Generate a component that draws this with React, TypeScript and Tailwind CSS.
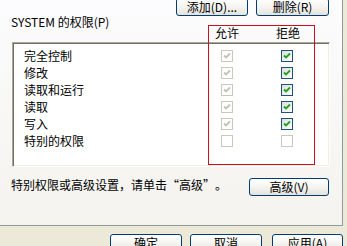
import React from "react";

type BoxKind = "allowOn" | "denyOn" | "off";

function Box({ kind }: { kind: BoxKind }) {
  const active = kind === "denyOn";
  return (
    <svg width="12" height="12" viewBox="0 0 12 12" className="block">
      <defs>
        <linearGradient id="cbg" x1="0" y1="0" x2="1" y2="1">
          <stop offset="0" stopColor="#dcdcd7" />
          <stop offset="1" stopColor="#ffffff" />
        </linearGradient>
      </defs>
      <rect
        x="0.5"
        y="0.5"
        width="11"
        height="11"
        fill={active ? "url(#cbg)" : "#ffffff"}
        stroke={active ? "#1c5180" : "#cac8bb"}
      />
      {kind !== "off" && (
        <polyline
          points="3,5.5 5,7.5 9,3.5"
          fill="none"
          stroke={active ? "#21a121" : "#c4c2b6"}
          strokeWidth="1.8"
        />
      )}
    </svg>
  );
}

function XPButton({ label, w }: { label: string; w: string }) {
  return (
    <div
      className={`${w} h-[18px] shrink-0 rounded-[3px] border border-[#003c74] bg-linear-to-b from-[#ffffff] via-[#f5f4f0] to-[#e3e2da] flex items-center justify-center leading-none text-[12px] whitespace-nowrap`}
    >
      {label}
    </div>
  );
}

const rows: { name: string; allow: BoxKind; deny: BoxKind }[] = [
  { name: "完全控制", allow: "allowOn", deny: "denyOn" },
  { name: "修改", allow: "allowOn", deny: "denyOn" },
  { name: "读取和运行", allow: "allowOn", deny: "denyOn" },
  { name: "读取", allow: "allowOn", deny: "denyOn" },
  { name: "写入", allow: "allowOn", deny: "denyOn" },
  { name: "特别的权限", allow: "off", deny: "off" },
];

export default function App() {
  return (
    <div
      lang="zh-CN"
      className="relative w-[347px] h-[246px] overflow-hidden bg-[#ece9d8] font-['Noto_Sans_CJK_SC',sans-serif] text-[12px] text-black"
    >
      <div className="w-[343px] h-[228px] -mt-[2px] border-r border-b border-[#919b9c] bg-linear-to-b from-[#fcfcfe] to-[#f4f3ee] flex flex-col">
        <div className="flex justify-end pr-[13px]">
          <XPButton label="添加(D)..." w="w-[72px]" />
          <div className="w-[8px]" />
          <XPButton label="删除(R)" w="w-[73px]" />
        </div>
        <div className="pl-[11px] h-[11px] leading-[11px] whitespace-nowrap">
          SYSTEM 的权限(P)
        </div>
        <div className="flex h-[11px] leading-[11px]">
          <div className="ml-[215px] w-[24px] text-center whitespace-nowrap">允许</div>
          <div className="ml-[37px] w-[24px] text-center whitespace-nowrap">拒绝</div>
        </div>
        <div className="mt-[4px] ml-[12px] w-[318px] h-[125px] bg-white border border-t-[#aca899] border-l-[#aca899] border-b-white border-r-white shadow-[inset_1px_1px_0_#716f64,inset_-1px_-1px_0_#f1efe2] pt-[4px] pl-[11px]">
          {rows.map((r) => (
            <div
              key={r.name}
              className="grid grid-cols-[197px_12px_48px_12px] h-[17px] items-center"
            >
              <div className="leading-[17px] whitespace-nowrap">{r.name}</div>
              <Box kind={r.allow} />
              <div />
              <Box kind={r.deny} />
            </div>
          ))}
        </div>
        <div className="mt-[11px] flex justify-between items-start pl-[11px] pr-[13px] h-[18px]">
          <div className="leading-[14px] whitespace-nowrap">
            特别权限或高级设置，请单击
            <span className="inline-block w-[12px] text-right">“</span>
            高级
            <span className="inline-block w-[12px] text-left">”</span>
            。
          </div>
          <XPButton label="高级(V)" w="w-[80px]" />
        </div>
      </div>
      <div className="mt-[8px] flex pl-[110px]">
        <XPButton label="确定" w="w-[72px]" />
        <div className="w-[8px] shrink-0" />
        <XPButton label="取消" w="w-[72px]" />
        <div className="w-[10px] shrink-0" />
        <XPButton label="应用(A)" w="w-[71px]" />
      </div>
      <div className="absolute left-[208px] top-[25px] w-[107px] h-[140px] border border-[#cc1020] pointer-events-none" />
    </div>
  );
}
